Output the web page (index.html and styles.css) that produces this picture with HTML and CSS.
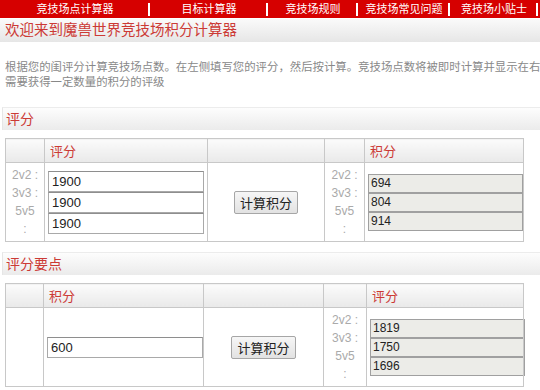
FILE: index.html
```html
<!DOCTYPE html>
<html lang="zh-CN">
<head>
  <meta charset="UTF-8">
  <title>魔兽世界竞技场积分计算器</title>
  <link rel="stylesheet" href="styles.css">
</head>
<body>
  <div class="nav">
    <a class="nav-item" href="#">竞技场点计算器</a>
    <a class="nav-item" href="#">目标计算器</a>
    <a class="nav-item" href="#">竞技场规则</a>
    <a class="nav-item" href="#">竞技场常见问题</a>
    <a class="nav-item" href="#">竞技场小贴士</a>
  </div>

  <h1 class="page-title">欢迎来到魔兽世界竞技场积分计算器</h1>

  <div class="intro">
    <p>根据您的闺评分计算竞技场点数。在左侧填写您的评分，然后按计算。竞技场点数将被即时计算并显示在右侧。</p>
    <p>需要获得一定数量的积分的评级</p>
  </div>

  <h2 class="section-title">评分</h2>
  <table class="calc calc-points">
    <colgroup>
      <col class="c-label"><col class="c-input"><col class="c-action"><col class="c-label2"><col class="c-result">
    </colgroup>
    <tr>
      <th></th>
      <th>评分</th>
      <th></th>
      <th></th>
      <th>积分</th>
    </tr>
    <tr>
      <td class="bracket">2v2 :<br>3v3 :<br>5v5<br>:</td>
      <td>
        <input class="field" type="text" value="1900">
        <input class="field" type="text" value="1900">
        <input class="field" type="text" value="1900">
      </td>
      <td class="action"><button class="calc-btn">计算积分</button></td>
      <td class="bracket">2v2 :<br>3v3 :<br>5v5<br>:</td>
      <td>
        <input class="result" type="text" value="694" readonly>
        <input class="result" type="text" value="804" readonly>
        <input class="result" type="text" value="914" readonly>
      </td>
    </tr>
  </table>

  <h2 class="section-title">评分要点</h2>
  <table class="calc calc-target">
    <colgroup>
      <col class="c-label"><col class="c-input"><col class="c-action"><col class="c-label2"><col class="c-result">
    </colgroup>
    <tr>
      <th></th>
      <th>积分</th>
      <th></th>
      <th></th>
      <th>评分</th>
    </tr>
    <tr>
      <td class="bracket"></td>
      <td><input class="field" type="text" value="600"></td>
      <td class="action"><button class="calc-btn">计算积分</button></td>
      <td class="bracket">2v2 :<br>3v3 :<br>5v5<br>:</td>
      <td>
        <input class="result" type="text" value="1819" readonly>
        <input class="result" type="text" value="1750" readonly>
        <input class="result" type="text" value="1696" readonly>
      </td>
    </tr>
  </table>
</body>
</html>
```

FILE: styles.css
```css
body {
  margin: 0;
  background: #fff;
  font-family: "Liberation Sans", "Noto Sans CJK SC", sans-serif;
  overflow: hidden;
}
.nav {
  display: flex;
  height: 18px;
  background: #d60000;
}
.nav-item {
  position: relative;
  display: block;
  color: #fff;
  font-size: 11px;
  line-height: 18px;
  text-align: center;
  text-decoration: none;
}
.nav-item::after {
  content: "";
  position: absolute;
  right: 0;
  top: 3px;
  width: 2px;
  height: 13px;
  background: #fff;
}
.nav-item:nth-child(1) { width: 150px; }
.nav-item:nth-child(2) { width: 118px; }
.nav-item:nth-child(3) { width: 90px; }
.nav-item:nth-child(4) { width: 92px; }
.nav-item:nth-child(5) { width: 88px; }

.page-title {
  margin: 1px 0 0;
  height: 23px;
  padding-left: 5px;
  background: linear-gradient(#fafafa, #e6e6e6);
  color: #cc3a35;
  font-size: 14.5px;
  font-weight: normal;
  line-height: 23px;
}
.intro {
  margin: 18px 0 0 5px;
  overflow: hidden;
  color: #888;
  font-size: 11.4px;
  line-height: 15px;
}
.intro p {
  margin: 0;
  white-space: nowrap;
}

.section-title {
  margin: 17px 0 0 2px;
  height: 22px;
  padding-left: 3px;
  border-top: 1px solid #ececec;
  border-left: 1px solid #e6e6e6;
  background: linear-gradient(#fdfdfd, #ebebeb);
  color: #cc3a35;
  font-size: 14px;
  font-weight: normal;
  line-height: 22px;
}
.calc + .section-title {
  margin-top: 10px;
}

.calc {
  margin: 8px 0 0 5px;
  width: 519px;
  table-layout: fixed;
  border-collapse: collapse;
}
.calc th, .calc td {
  border: 1px solid #c8c8c8;
  padding: 0;
}
.calc th {
  height: 23px;
  padding-left: 5px;
  background: linear-gradient(#fbfbfb, #e9e9e9);
  color: #cc3a35;
  font-size: 13px;
  font-weight: normal;
  text-align: left;
}
.calc td {
  height: 78px;
  padding: 0 3px;
  vertical-align: middle;
}
.calc td.bracket {
  padding: 0;
  color: #aaa;
  font-size: 12px;
  line-height: 18px;
  text-align: center;
}
.calc td.action {
  text-align: center;
}
.calc-points .c-label { width: 39px; }
.calc-points .c-input { width: 163px; }
.calc-points .c-action { width: 117px; }
.calc-points .c-label2 { width: 40px; }
.calc-target .c-label { width: 38px; }
.calc-target .c-input { width: 160px; }
.calc-target .c-action { width: 120px; }
.calc-target .c-label2 { width: 43px; }

.field {
  display: block;
  box-sizing: border-box;
  width: 156px;
  height: 21px;
  margin: 0;
  padding: 0 3px;
  border: 1px solid #a9a9a9;
  border-top-color: #8e8e8e;
  background: #fff;
  color: #222;
  font-family: "Liberation Sans", sans-serif;
  font-size: 13px;
}
.result {
  display: block;
  box-sizing: border-box;
  width: 155px;
  height: 19px;
  margin: 0;
  padding: 0 2px;
  border: 1px solid #a0a0a0;
  background: #ecece8;
  color: #222;
  font-family: "Liberation Sans", sans-serif;
  font-size: 12px;
}
.calc-btn {
  height: 23px;
  padding: 0 5px;
  border: 1px solid #a6a6a6;
  border-radius: 2px;
  background: linear-gradient(#f6f6f6, #e2e2e2);
  color: #222;
  font-family: "Noto Sans CJK SC", sans-serif;
  font-size: 13px;
}
```
